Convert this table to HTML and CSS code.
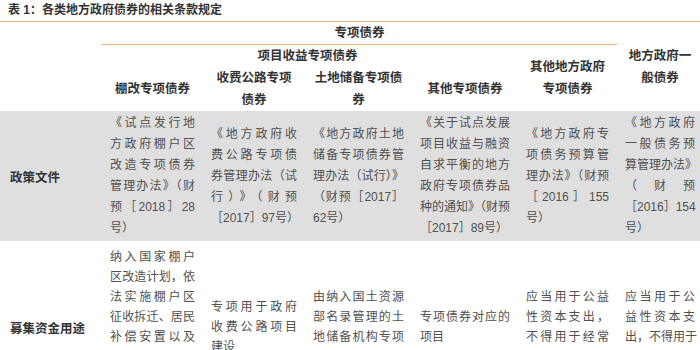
FILE: index.html
```html
<!DOCTYPE html>
<html lang="zh-CN">
<head>
<meta charset="utf-8">
<title>各类地方政府债券的相关条款规定</title>
<link rel="stylesheet" href="styles.css">
</head>
<body>
<div class="caption">表 1：各类地方政府债券的相关条款规定</div>
<table class="bonds">
  <colgroup>
    <col class="c0"><col class="c1"><col class="c2"><col class="c3"><col class="c4"><col class="c5"><col class="c6">
  </colgroup>
  <thead>
    <tr>
      <th rowspan="3"></th>
      <th colspan="5" class="group">专项债券</th>
      <th rowspan="3" class="last">地方政府一<br>般债券</th>
    </tr>
    <tr>
      <th></th>
      <th colspan="2">项目收益专项债券</th>
      <th></th>
      <th rowspan="2">其他地方政府<br>专项债券</th>
    </tr>
    <tr>
      <th>棚改专项债券</th>
      <th>收费公路专项<br>债券</th>
      <th>土地储备专项债<br>券</th>
      <th>其他专项债券</th>
    </tr>
  </thead>
  <tbody>
    <tr class="shade">
      <td class="label">政策文件</td>
      <td class="txt"><span class="ln">《试点发行地</span><span class="ln">方政府棚户区</span><span class="ln">改造专项债券</span><span class="ln">管理办法》（财</span><span class="ln">预［2018］28</span><span class="ln">号）</span></td>
      <td class="txt"><span class="ln">《地方政府收</span><span class="ln">费公路专项债</span><span class="ln">券管理办法（试</span><span class="ln">行）》（财预</span><span class="ln">［2017］97号）</span></td>
      <td class="txt"><span class="ln">《地方政府土地</span><span class="ln">储备专项债券管</span><span class="ln">理办法（试行）》</span><span class="ln">（财预［2017］</span><span class="ln">62号）</span></td>
      <td class="txt"><span class="ln">《关于试点发展</span><span class="ln">项目收益与融资</span><span class="ln">自求平衡的地方</span><span class="ln">政府专项债券品</span><span class="ln">种的通知》（财预</span><span class="ln">［2017］89号）</span></td>
      <td class="txt"><span class="ln">《地方政府专</span><span class="ln">项债务预算管</span><span class="ln">理办法》（财预</span><span class="ln">［2016］155</span><span class="ln">号）</span></td>
      <td class="txt last"><span class="ln">《地方政府</span><span class="ln">一般债务预</span><span class="ln">算管理办法》</span><span class="ln">（财预</span><span class="ln">［2016］154</span><span class="ln">号）</span></td>
    </tr>
    <tr class="use">
      <td class="label">募集资金用途</td>
      <td class="txt"><span class="ln">纳入国家棚户</span><span class="ln">区改造计划，依</span><span class="ln">法实施棚户区</span><span class="ln">征收拆迁、居民</span><span class="ln">补偿安置以及</span><span class="ln">相应的骨架路</span><span class="ln">网、配套基础</span><span class="ln">设施建设</span></td>
      <td class="txt"><span class="ln">专项用于政府</span><span class="ln">收费公路项目</span><span class="ln">建设</span></td>
      <td class="txt"><span class="ln">由纳入国土资源</span><span class="ln">部名录管理的土</span><span class="ln">地储备机构专项</span><span class="ln">用于土地储备</span></td>
      <td class="txt"><span class="ln">专项债券对应的</span><span class="ln">项目</span></td>
      <td class="txt"><span class="ln">应当用于公益</span><span class="ln">性资本支出，</span><span class="ln">不得用于经常</span><span class="ln">性支出</span></td>
      <td class="txt last"><span class="ln">应当用于公</span><span class="ln">益性资本支</span><span class="ln">出，不得用于</span><span class="ln">经常性支出</span></td>
    </tr>
  </tbody>
</table>
</body>
</html>
```

FILE: styles.css
```css
html, body {
  margin: 0;
  padding: 0;
  background: #ffffff;
}

body {
  width: 700px;
  height: 350px;
  overflow: hidden;
  font-family: "Liberation Sans", "Noto Sans CJK SC", sans-serif;
  color: #333333;
}

.caption {
  padding: 0 8px;
  height: 21px;
  line-height: 21px;
  font-size: 12px;
  font-weight: bold;
  color: #333333;
}

.bonds {
  width: 700px;
  table-layout: fixed;
  border-collapse: collapse;
  border-top: 1px solid #f2b27c;
}

.c0 { width: 102px; }
.c1 { width: 101px; }
.c2 { width: 102px; }
.c3 { width: 107px; }
.c4 { width: 106px; }
.c5 { width: 99px; }
.c6 { width: 83px; }

.bonds th {
  padding: 0 8px;
  font-size: 12.5px;
  line-height: 22px;
  font-weight: bold;
  color: #333333;
  text-align: center;
  vertical-align: middle;
}

.bonds th.group {
  border-bottom: 1px solid #f2b27c;
}

.bonds th.last {
  padding: 0 5px 0 8px;
}

.bonds td {
  vertical-align: middle;
}

.shade td {
  background: #dfdfdf;
}

.label {
  padding: 0 8px 0 10px;
  font-size: 12.5px;
  font-weight: bold;
  color: #333333;
  white-space: nowrap;
}

.txt {
  padding: 2px 8px;
  font-size: 12px;
  line-height: 21px;
  color: #505050;
}

.txt.last {
  padding-right: 5px;
}

.use .txt {
  padding-top: 6px;
  padding-bottom: 6px;
  line-height: 20px;
}

.ln {
  display: block;
  white-space: nowrap;
  text-align: justify;
  text-align-last: justify;
}

.ln:last-child {
  text-align-last: left;
}
```
